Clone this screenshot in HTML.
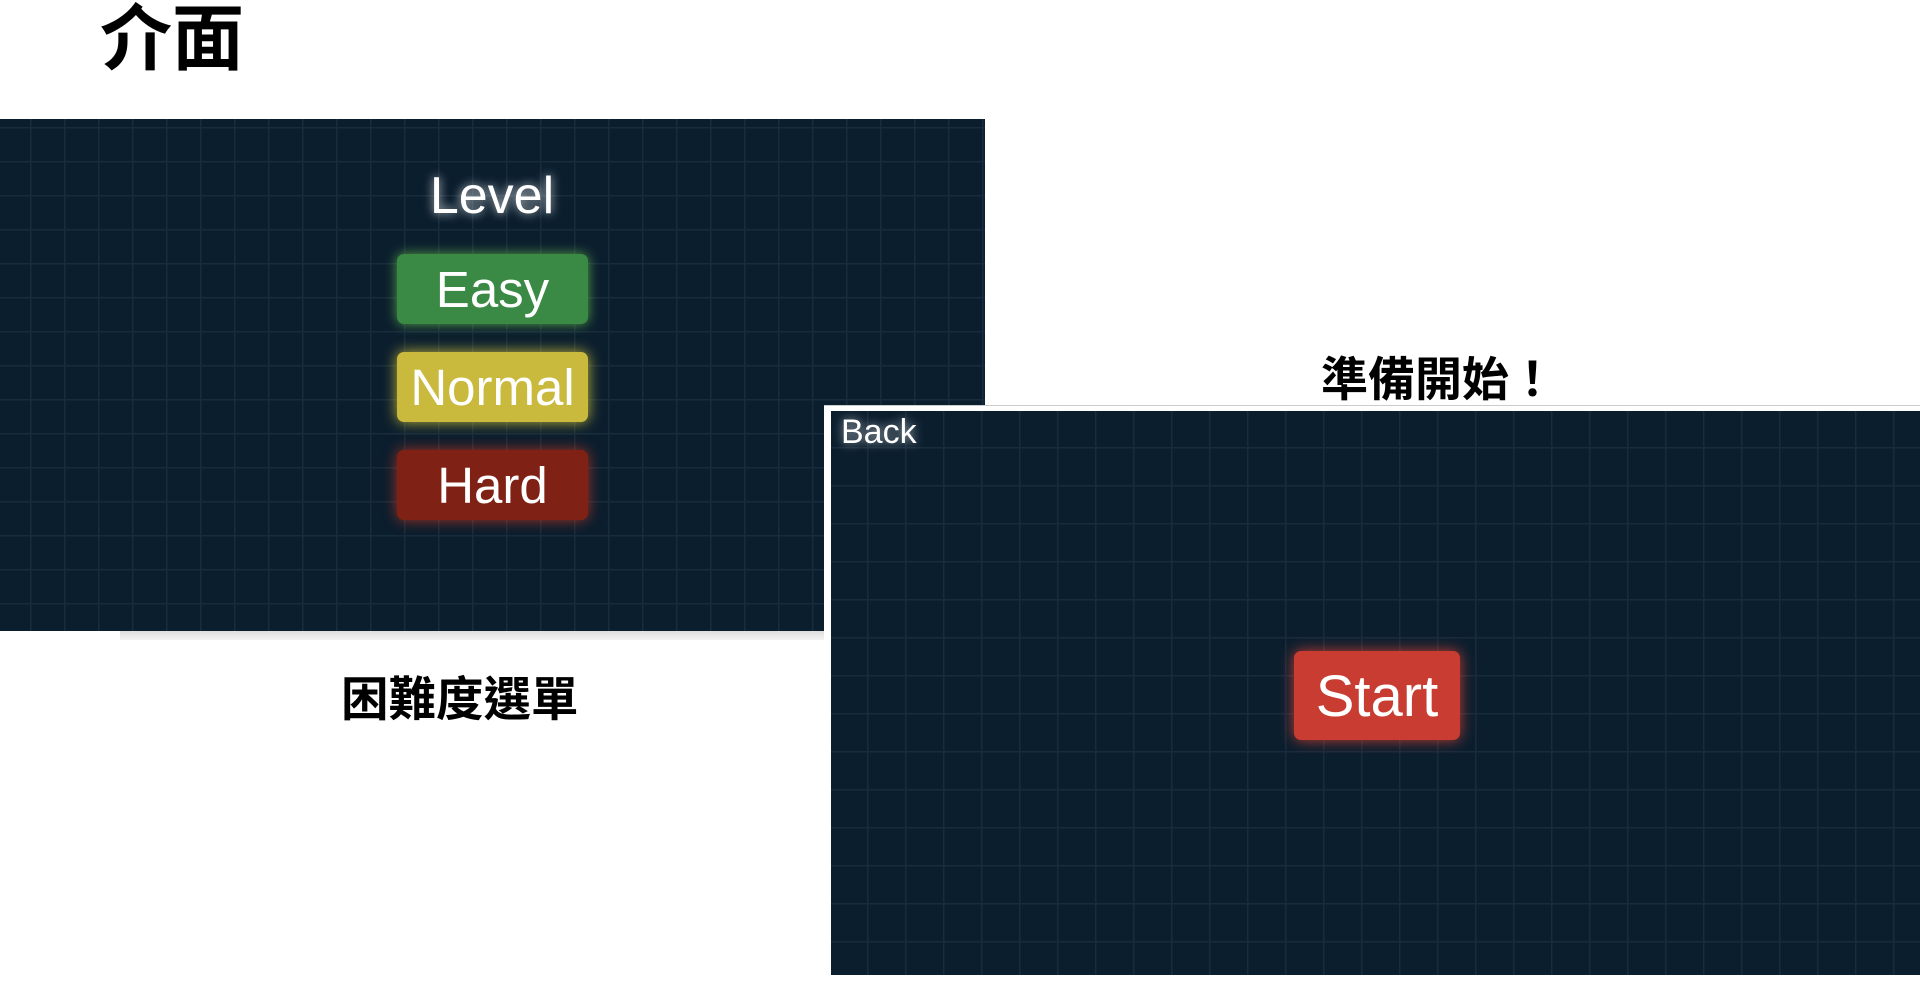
<!DOCTYPE html>
<html><head><meta charset="utf-8"><style>
body{margin:0;width:1920px;height:983px;background:#fff;position:relative;overflow:hidden;font-family:"Liberation Sans","Noto Sans CJK TC",sans-serif}
.abs{position:absolute}
.grid{background-color:#0b1e2e;background-image:linear-gradient(to right,#182c3d 1.5px,transparent 1.5px),linear-gradient(to bottom,#182c3d 1.5px,transparent 1.5px)}
.btn{position:absolute;border-radius:7px;color:#fff;text-align:center;font-size:51px;}
.cjk{position:absolute;font-weight:bold;color:#000;font-family:"Noto Sans CJK TC",sans-serif;white-space:nowrap}
</style></head><body>
<div class="cjk" style="left:100px;top:-20px;font-size:72px">介面</div>
<div class="abs grid" style="left:0;top:119px;width:985px;height:512px;background-size:34px 34px;background-position:-4px 8px"></div>
<div class="abs" style="left:120px;top:631px;width:704px;height:9px;background:linear-gradient(#ddd,#f4f4f4)"></div>
<div class="abs" style="left:392px;top:166px;width:200px;text-align:center;color:#fff;font-size:52px;text-shadow:0 0 10px rgba(255,255,255,.8)">Level</div>
<div class="btn" style="left:397px;top:254px;width:191px;height:70px;line-height:72px;background:#3a8a45;box-shadow:0 0 12px rgba(120,220,80,.7)">Easy</div>
<div class="btn" style="left:397px;top:352px;width:191px;height:70px;line-height:72px;background:#c9b93d;box-shadow:0 0 14px rgba(240,220,60,.8)">Normal</div>
<div class="btn" style="left:397px;top:450px;width:191px;height:70px;line-height:72px;background:#7f2114;box-shadow:0 0 14px rgba(230,60,30,.7)">Hard</div>
<div class="cjk" style="left:341px;top:661px;font-size:47.5px">困難度選單</div>
<div class="cjk" style="left:1321px;top:341px;font-size:47px">準備開始！</div>
<div class="abs" style="left:824px;top:405px;width:1096px;height:578px;background:#fff;border-top:1px solid #ccc"></div>
<div class="abs grid" style="left:831px;top:411px;width:1089px;height:564px;background-size:38px 38px;background-position:36px 36px"></div>
<div class="abs" style="left:841px;top:413px;color:#fff;font-size:34px;text-shadow:0 0 10px rgba(255,255,255,.7)">Back</div>
<div class="btn" style="left:1294px;top:651px;width:166px;height:89px;line-height:91px;font-size:58px;background:#c83c31;box-shadow:0 0 14px rgba(240,70,50,.8)">Start</div>
</body></html>
